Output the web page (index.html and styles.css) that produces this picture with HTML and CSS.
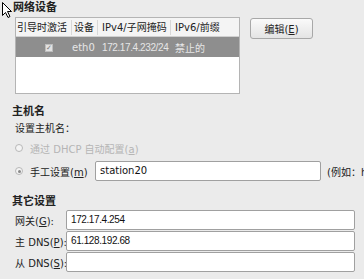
FILE: index.html
```html
<!DOCTYPE html>
<html lang="zh">
<head>
    <meta charset="UTF-8">
    <title>网络设置</title>
    <link rel="stylesheet" href="styles.css">
</head>
<body>

    <svg class="cursor" width="12" height="18" viewBox="0 0 12 18">
        <path d="M1.5 1.5 L1.5 14.5 L4.5 11.5 L7 16.5 L9 15.5 L6.5 10.5 L10.5 10.5 Z" fill="#fff" stroke="#000" stroke-width="1"/>
    </svg>

    <div class="section-title first">网络设备</div>
    <div class="devices">
        <div class="device-table">
            <div class="row head">
                <div class="c1">引导时激活</div>
                <div class="c2">设备</div>
                <div class="c3">IPv4/子网掩码</div>
                <div class="c4">IPv6/前缀</div>
            </div>
            <div class="row selected">
                <div class="c1"><span class="check">&#10003;</span></div>
                <div class="c2">eth0</div>
                <div class="c3 num">172.17.4.232/24</div>
                <div class="c4">禁止的</div>
            </div>
        </div>
        <button class="btn">编辑(<u>E</u>)</button>
    </div>

    <div class="section-title host">主机名</div>
    <div class="sub-label">设置主机名：</div>
    <div class="radio-row disabled">
        <span class="radio"></span>
        <span>通过 DHCP 自动配置(<u>a</u>)</span>
    </div>
    <div class="radio-row manual">
        <span class="radio on"></span>
        <span class="radio-text">手工设置(<u>m</u>)</span>
        <div class="field host-field">station20</div>
        <span class="hint">(例如：h</span>
    </div>

    <div class="section-title other">其它设置</div>
    <div class="form-row">
        <label>网关(<u>G</u>):</label>
        <div class="field num">172.17.4.254</div>
    </div>
    <div class="form-row">
        <label>主 DNS(<u>P</u>):</label>
        <div class="field num">61.128.192.68</div>
    </div>
    <div class="form-row">
        <label>从 DNS(<u>S</u>):</label>
        <div class="field num"></div>
    </div>

</body>
</html>
```

FILE: styles.css
```css
* {
    margin: 0;
    padding: 0;
    box-sizing: border-box;
}

body {
    width: 364px;
    height: 279px;
    overflow: hidden;
    background-color: #ebebeb;
    color: #222;
    font-family: "DejaVu Sans", "Noto Sans CJK SC", sans-serif;
    font-size: 10px;
    position: relative;
}

.cursor {
    position: absolute;
    left: 1px;
    top: 1px;
}

.section-title {
    font-size: 11px;
    font-weight: bold;
    padding-left: 12px;
    height: 14px;
    line-height: 14px;
}

.section-title.first {
    margin-top: 1px;
    padding-left: 13px;
}

.devices {
    display: flex;
    align-items: flex-start;
    margin-top: 2px;
    padding-left: 15px;
}

.device-table {
    width: 225px;
    height: 77px;
    background-color: #fff;
    border: 1px solid #b4b4b4;
}

.row {
    display: flex;
    align-items: center;
}

.row > div {
    white-space: nowrap;
    overflow: hidden;
}

.row.head {
    height: 19px;
    background-color: #f4f4f4;
    border-bottom: 1px solid #d0d0d0;
}

.row.head > div {
    border-right: 1px solid #d8d8d8;
    height: 15px;
    line-height: 15px;
}

.row.head > div.c4 {
    border-right: none;
}

.c1 { width: 56px; padding-left: 1px; }
.c2 { width: 26px; padding-left: 2px; }
.c3 { width: 73px; padding-left: 4px; }
.c4 { flex: 1; padding-left: 4px; }

.row.selected {
    height: 20px;
    background-color: #8e8e8e;
    color: #e6e6e6;
}

.row.selected .c1 {
    text-align: right;
    padding-right: 19px;
}

.row.selected .c2 {
    padding-left: 0;
    overflow: visible;
}

.check {
    display: inline-block;
    width: 8px;
    height: 8px;
    background-color: #e2e2e2;
    border: 1px solid #bdbdbd;
    color: #777;
    font-size: 7px;
    line-height: 7px;
    text-align: center;
    vertical-align: middle;
}

.num {
    font-family: "Liberation Sans", "Noto Sans CJK SC", sans-serif;
    letter-spacing: -0.4px;
}

.btn {
    margin-left: 10px;
    margin-top: 1px;
    width: 63px;
    height: 21px;
    border: 1px solid #a8a8a8;
    border-radius: 3px;
    background: linear-gradient(#fafafa, #e4e4e4);
    font-family: "DejaVu Sans", "Noto Sans CJK SC", sans-serif;
    font-size: 10px;
    color: #222;
}

.section-title.host {
    margin-top: 11px;
}

.sub-label {
    padding-left: 15px;
    margin-top: 3px;
    font-size: 10px;
    height: 13px;
    line-height: 13px;
}

.radio-row {
    display: flex;
    align-items: center;
    padding-left: 15px;
    white-space: nowrap;
}

.radio-row > * {
    flex-shrink: 0;
}

.radio-row.disabled {
    margin-top: 6px;
    height: 14px;
    color: #b5b5b5;
}

.radio {
    display: inline-block;
    width: 8px;
    height: 8px;
    border: 1px solid #b8b8b8;
    border-radius: 50%;
    background-color: #f4f4f4;
    margin-right: 7px;
    position: relative;
}

.radio.on::after {
    content: "";
    position: absolute;
    left: 1.5px;
    top: 1.5px;
    width: 3px;
    height: 3px;
    border-radius: 50%;
    background-color: #888;
}

.radio-row.manual {
    margin-top: 6px;
    height: 20px;
}

.radio-text {
    width: 65px;
}

.field {
    height: 20px;
    line-height: 18px;
    background-color: #fff;
    border: 1px solid #a0a0a0;
    border-radius: 2px;
    padding-left: 4px;
    color: #111;
}

.host-field {
    width: 226px;
}

.hint {
    margin-left: 6px;
}

.section-title.other {
    margin-top: 14px;
}

.form-row {
    display: flex;
    align-items: center;
    padding-left: 15px;
    height: 20px;
    margin-top: 1px;
}

.form-row label {
    width: 51px;
    white-space: nowrap;
}

.form-row .field {
    width: 289px;
}
```
